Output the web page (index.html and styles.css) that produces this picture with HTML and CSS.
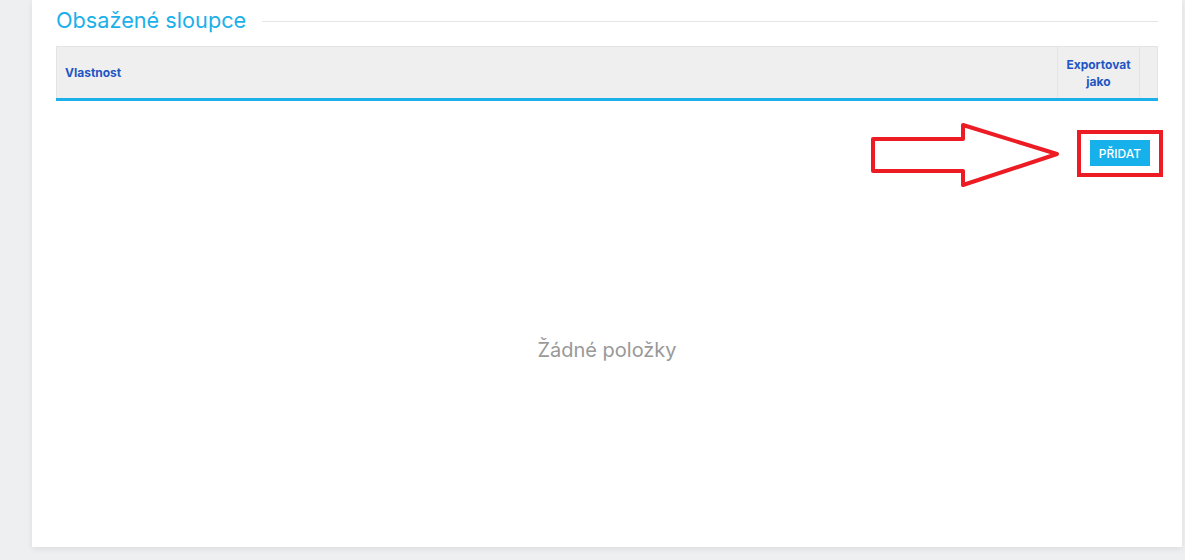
FILE: index.html
```html
<!DOCTYPE html>
<html lang="cs">
<head>
    <meta charset="UTF-8">
    <meta name="viewport" content="width=device-width, initial-scale=1.0">
    <title>Obsažené sloupce</title>
    <link rel="stylesheet" href="styles.css">
</head>
<body>
    <div class="page">
        <div class="card">
            <div class="section-title">
                <h2>Obsažené sloupce</h2>
                <span class="title-line"></span>
            </div>
            <table class="grid">
                <thead>
                    <tr>
                        <th class="col-prop">Vlastnost</th>
                        <th class="col-export">Exportovat jako</th>
                        <th class="col-empty"></th>
                    </tr>
                </thead>
            </table>
            <div class="toolbar">
                <button class="btn-add">PŘIDAT</button>
                <svg class="annot-arrow" width="200" height="70" viewBox="0 0 200 70">
                    <polygon points="3,16 93,16 93,2 187,31 93,62 93,48 3,48" fill="none" stroke="#ed1c24" stroke-width="4" stroke-linejoin="round"/>
                </svg>
                <div class="annot-box"></div>
            </div>
            <div class="empty">Žádné položky</div>
        </div>
    </div>
</body>
</html>
```

FILE: styles.css
```css
body {
    margin: 0;
    background-color: #eeeff1;
    font-family: Inter, 'Noto Sans', sans-serif;
    height: 560px;
    overflow: hidden;
}
.page {
    padding: 0 3px 0 32px;
    height: 547px;
}
.card {
    background: #fff;
    height: 547px;
    box-shadow: 0 2px 6px rgba(0, 0, 0, 0.08);
    padding: 0 24px;
    box-sizing: border-box;
}
.section-title {
    display: flex;
    align-items: center;
    height: 40px;
    padding-bottom: 6px;
}
.section-title h2 {
    margin: 0;
    font-size: 21.7px;
    font-weight: 400;
    color: #1bb0ea;
    white-space: nowrap;
}
.title-line {
    flex: 1;
    height: 1px;
    background: #e4e4e4;
    margin-left: 16px;
    margin-top: 3px;
}
.grid {
    width: 100%;
    border-collapse: collapse;
    border-bottom: 3px solid #1bb0ea;
}
.grid th {
    background: #efefef;
    border: 1px solid #e4e4e4;
    border-bottom: none;
    height: 51px;
    padding: 0 8px;
    font-size: 12px;
    font-weight: 700;
    color: #1e55c4;
    line-height: 17px;
}
.col-prop {
    text-align: left;
}
.col-export {
    width: 65px;
    text-align: center;
}
.col-empty {
    width: 1px;
}
.toolbar {
    position: relative;
    display: flex;
    justify-content: flex-end;
    padding: 39px 8px 0 0;
}
.btn-add {
    width: 60px;
    height: 26px;
    border: none;
    background: #16b1ea;
    color: #fff;
    font-family: Inter, 'Noto Sans', sans-serif;
    font-size: 12px;
    font-weight: 500;
    padding: 0;
}
.annot-arrow {
    position: absolute;
    left: 814px;
    top: 22px;
}
.annot-box {
    position: absolute;
    right: -5px;
    top: 29px;
    width: 78px;
    height: 39px;
    border: 4px solid #ed1c24;
}
.empty {
    text-align: center;
    margin-top: 172px;
    font-size: 20px;
    color: #999;
}
```
